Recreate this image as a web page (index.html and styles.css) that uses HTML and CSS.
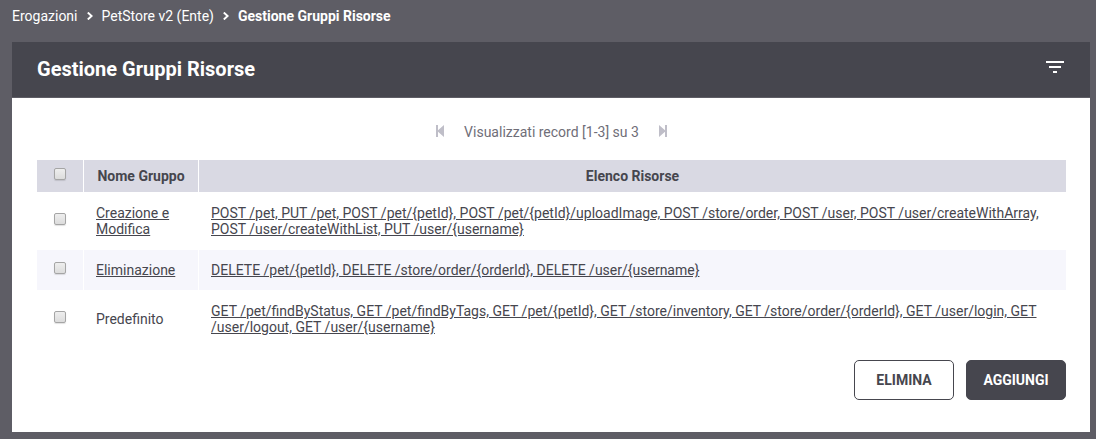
FILE: index.html
```html
<!DOCTYPE html>
<html lang="it">
<head>
<meta charset="utf-8">
<title>Gestione Gruppi Risorse</title>
<link rel="stylesheet" href="styles.css">
</head>
<body>
<nav class="breadcrumb" aria-label="Percorso">
  <a href="#">Erogazioni</a>
  <svg class="chevron" viewBox="0 0 6 8" aria-hidden="true"><path d="M.8.5 4.6 4 .8 7.5"/></svg>
  <a href="#">PetStore v2 (Ente)</a>
  <svg class="chevron" viewBox="0 0 6 8" aria-hidden="true"><path d="M.8.5 4.6 4 .8 7.5"/></svg>
  <strong>Gestione Gruppi Risorse</strong>
</nav>
<main class="panel">
  <header class="panel-header">
    <h1>Gestione Gruppi Risorse</h1>
    <button class="filter" type="button" aria-label="Filtra">
      <svg viewBox="0 0 18 12" aria-hidden="true"><path d="M0 0h18v2H0zM3 5h12v2H3zM7 10h4v2H7z"/></svg>
    </button>
  </header>
  <div class="content">
    <div class="pager">
      <button type="button" aria-label="Precedente" disabled><svg viewBox="0 0 8 12" aria-hidden="true"><path d="M0 0h2v12H0zM8 0v12L2 6.800V5.200z"/></svg></button>
      <span>Visualizzati record [1-3] su 3</span>
      <button type="button" aria-label="Successivo" disabled><svg viewBox="0 0 8 12" aria-hidden="true"><path d="M6 0h2v12H6zM0 0v12l6-5.200V5.200z"/></svg></button>
    </div>
    <table class="groups">
      <thead>
        <tr>
          <th class="col-check"><input type="checkbox" aria-label="Seleziona tutti"></th>
          <th class="col-name">Nome Gruppo</th>
          <th>Elenco Risorse</th>
        </tr>
      </thead>
      <tbody>
        <tr>
          <td class="col-check"><input type="checkbox" aria-label="Seleziona Creazione e Modifica"></td>
          <td><a href="#">Creazione e Modifica</a></td>
          <td><a href="#">POST /pet, PUT /pet, POST /pet/{petId}, POST /pet/{petId}/uploadImage, POST /store/order, POST /user, POST /user/createWithArray, POST /user/createWithList, PUT /user/{username}</a></td>
        </tr>
        <tr>
          <td class="col-check"><input type="checkbox" aria-label="Seleziona Eliminazione"></td>
          <td><a href="#">Eliminazione</a></td>
          <td><a href="#">DELETE /pet/{petId}, DELETE /store/order/{orderId}, DELETE /user/{username}</a></td>
        </tr>
        <tr>
          <td class="col-check"><input type="checkbox" aria-label="Seleziona Predefinito"></td>
          <td>Predefinito</td>
          <td><a href="#">GET /pet/findByStatus, GET /pet/findByTags, GET /pet/{petId}, GET /store/inventory, GET /store/order/{orderId}, GET /user/login, GET /user/logout, GET /user/{username}</a></td>
        </tr>
      </tbody>
    </table>
    <div class="actions">
      <button class="btn" type="button">ELIMINA</button>
      <button class="btn btn-primary" type="button">AGGIUNGI</button>
    </div>
  </div>
</main>
</body>
</html>
```
FILE: styles.css
```css
* { box-sizing: border-box; }
body {
  margin: 0;
  padding: 0 6px 7px 12px;
  background: #5e5d65;
  color: #46464e;
  font-family: Roboto, sans-serif;
  font-size: 14px;
  line-height: 16px;
}
.breadcrumb {
  display: flex;
  align-items: center;
  padding: 8px 0 18px;
  color: #fff;
}
.breadcrumb a { color: inherit; text-decoration: none; }
.chevron {
  width: 6px;
  height: 8px;
  margin: 0 9px;
  fill: none;
  stroke: #fff;
  stroke-width: 1.9;
}
.panel { background: #fff; }
.panel-header {
  display: flex;
  align-items: center;
  justify-content: space-between;
  padding: 16px 24px 16px 25px;
  background: #46464e;
  border-bottom: 1px solid #5e5d65;
}
h1 {
  margin: 0;
  color: #fff;
  font-size: 20px;
  font-weight: 700;
  line-height: 23px;
}
button { font: inherit; cursor: pointer; }
.filter {
  padding: 0 2px 6px;
  border: 0;
  background: none;
}
.filter svg {
  display: block;
  width: 18px;
  height: 12px;
  fill: #fff;
}
.content { padding: 26px 24px 32px 25px; }
.pager {
  display: flex;
  align-items: center;
  justify-content: center;
  gap: 20px;
  margin-bottom: 20px;
  color: #6f6e78;
}
.pager button {
  padding: 0 0 2px;
  border: 0;
  background: none;
}
.pager svg {
  display: block;
  width: 8px;
  height: 12px;
  fill: #bfbec8;
}
.groups {
  width: 100%;
  border-collapse: separate;
  border-spacing: 0;
  table-layout: fixed;
}
.groups th {
  padding: 8px 0;
  background: #d9d9e3;
  font-weight: 700;
}
.groups th + th { border-left: 1px solid #fff; }
.groups td { padding: 12px; }
.groups tbody tr { height: 58px; }
.groups tbody tr:nth-child(even) {
  height: 40px;
  background: #f6f6fc;
}
.groups a { color: inherit; }
.groups .col-check {
  width: 46px;
  padding: 0 0 4px;
  text-align: center;
}
.col-name { width: 115px; }
.groups td + td { border-left: 1px solid #fff; }
input[type="checkbox"] {
  appearance: none;
  display: block;
  width: 12px;
  height: 12px;
  margin: 0 auto;
  border: 1px solid #a5a5a5;
  border-radius: 2px;
  background: linear-gradient(#eee, #dcdcdc);
  box-shadow: 0 1px 1px rgba(0, 0, 0, .12);
}
input[type="checkbox"]:checked { background: #46464e; }
.actions {
  display: flex;
  justify-content: flex-end;
  gap: 12px;
  margin-top: 12px;
}
.btn {
  width: 100px;
  height: 40px;
  padding: 0;
  border: 1px solid #46464e;
  border-radius: 5px;
  background: #fff;
  color: #46464e;
  font-weight: 700;
}
.btn-primary {
  background: #46464e;
  color: #fff;
}
```
